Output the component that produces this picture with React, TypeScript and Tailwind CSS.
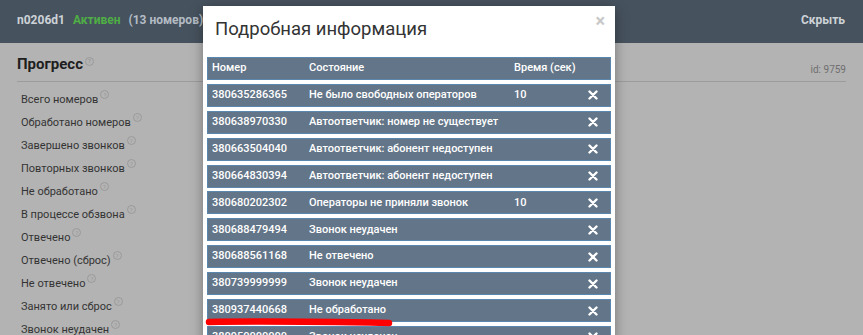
import React from "react";

const stats = [
  "Всего номеров",
  "Обработано номеров",
  "Завершено звонков",
  "Повторных звонков",
  "Не обработано",
  "В процессе обзвона",
  "Отвечено",
  "Отвечено (сброс)",
  "Не отвечено",
  "Занято или сброс",
  "Звонок неудачен",
];

const rows = [
  { num: "380635286365", state: "Не было свободных операторов", time: "10" },
  { num: "380638970330", state: "Автоответчик: номер не существует", time: "" },
  { num: "380663504040", state: "Автоответчик: абонент недоступен", time: "" },
  { num: "380664830394", state: "Автоответчик: абонент недоступен", time: "" },
  { num: "380680202302", state: "Операторы не приняли звонок", time: "10" },
  { num: "380688479494", state: "Звонок неудачен", time: "" },
  { num: "380688561168", state: "Не отвечено", time: "" },
  { num: "380739999999", state: "Звонок неудачен", time: "" },
  { num: "380937440668", state: "Не обработано", time: "" },
  { num: "380950000000", state: "Звонок неудачен", time: "" },
];

function Hint() {
  return (
    <span className="relative -top-[6px] ml-[2px] inline-flex h-[9px] w-[9px] items-center justify-center rounded-full border border-[#9a9a9a] text-[6px] leading-none text-[#9a9a9a]">
      ?
    </span>
  );
}

function Cross() {
  return (
    <svg width="10" height="10" viewBox="0 0 10 10">
      <path d="M1.5 1.5 L8.5 8.5 M8.5 1.5 L1.5 8.5" stroke="#fff" strokeWidth="2.4" strokeLinecap="round" />
    </svg>
  );
}

const rowCls =
  "grid h-[23px] grid-cols-[97px_205px_73px_1fr] items-center whitespace-nowrap border border-[#5b86ad] bg-[#637588] pl-[4px]";

export default function App() {
  return (
    <div className="relative h-[335px] w-[863px] overflow-hidden bg-[#b3b3b3] font-['Roboto',sans-serif]">
      {/* page behind the overlay */}
      <div className="flex h-[43px] items-center justify-between bg-[#46525e] pb-[3px] pl-[17px] pr-[18px] text-[12px] font-bold">
        <div className="flex items-center gap-[8px]">
          <span className="text-[#cdd2d7]">n0206d1</span>
          <span className="text-[#4fae45]">Активен</span>
          <span className="text-[#b4bcc4]">(13 номеров)</span>
        </div>
        <span className="text-[#cdd2d7]">Скрыть</span>
      </div>

      <div className="px-[17px]">
        <div className="flex items-end justify-between border-b border-[#9c9c9c] pb-[5px] pt-[10px]">
          <h2 className="text-[15px] font-bold text-[#1e1e1e]">
            Прогресс
            <Hint />
          </h2>
          <span className="mb-[-1px] text-[10px] text-[#6f6f6f]">id: 9759</span>
        </div>
        <ul className="flex flex-col gap-[6px] pl-[4px] pt-[9px] text-[11px] text-[#333]">
          {stats.map((s) => (
            <li key={s} className="h-[17px] leading-[17px]">
              {s}
              <Hint />
            </li>
          ))}
        </ul>
      </div>

      {/* modal */}
      <div className="absolute left-[203px] top-[6px] w-[412px] bg-white shadow-[0_3px_12px_rgba(0,0,0,0.35)]">
        <div className="flex items-start justify-between pl-[12px] pr-[10px] pt-[9px]">
          <h3 className="text-[18.5px] font-normal leading-[28px] text-[#333]">Подробная информация</h3>
          <span className="mt-[-8px] text-[18px] font-bold leading-[28px] text-[#c8c8c8]">×</span>
        </div>
        <div className="flex flex-col gap-[3.9px] px-[4px] pb-[20px] pt-[14px] text-[11px] font-medium text-white">
          <div className={rowCls}>
            <span>Номер</span>
            <span>Состояние</span>
            <span>Время (сек)</span>
            <span />
          </div>
          {rows.map((r) => (
            <div key={r.num} className={rowCls}>
              <span>{r.num}</span>
              <span>{r.state}</span>
              <span>{r.time}</span>
              <span className="flex justify-start pl-[1px]">
                <Cross />
              </span>
            </div>
          ))}
        </div>
      </div>

      {/* red annotation stroke */}
      <svg className="absolute left-[205px] top-[316px]" width="190" height="12" viewBox="0 0 190 12">
        <path d="M4 6 C 60 5, 130 6, 184 7" stroke="#ff0000" strokeWidth="6.5" strokeLinecap="round" fill="none" />
      </svg>
    </div>
  );
}
